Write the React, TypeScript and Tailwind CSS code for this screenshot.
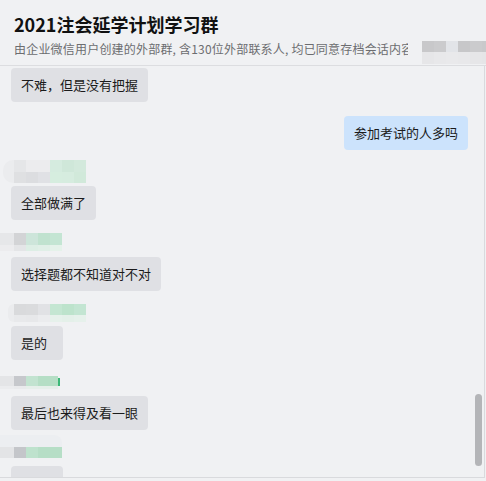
import React from "react";

type Row = { h: number; cells: [number, string][] };

function Mosaic({ rows, pl = 0 }: { rows: Row[]; pl?: number }) {
  return (
    <div className="flex flex-col" style={{ paddingLeft: pl }}>
      {rows.map((r, i) => (
        <div key={i} className="flex">
          {r.cells.map(([w, c], j) => (
            <div key={j} style={{ width: w, height: r.h, background: c }} />
          ))}
        </div>
      ))}
    </div>
  );
}

function Bubble({ text, className = "" }: { text: string; className?: string }) {
  return (
    <div
      className={`inline-flex h-[34px] min-w-[52px] items-center rounded-[4px] bg-[#dfe0e4] px-[10px] text-[13px] leading-[18px] text-[#1b1b1b] ${className}`}
    >
      {text}
    </div>
  );
}

export default function App() {
  return (
    <div
      className="relative h-[481px] w-[486px] overflow-hidden bg-[#f0f1f3]"
      style={{ fontFamily: '"Noto Sans CJK SC", "Noto Sans", sans-serif' }}
    >
      {/* header */}
      <div className="relative h-[66px] border-b border-[#dcdde0] pl-[14px] pt-[12px]">
        <div className="text-[18px] font-bold leading-[24px] text-[#111]">2021注会延学计划学习群</div>
        <div className="mt-[4px] w-[394px] overflow-hidden whitespace-nowrap text-[12px] leading-[18px] tracking-[0.2px] text-[#6c6d70]">
          由企业微信用户创建的外部群, 含130位外部联系人, 均已同意存档会话内容
        </div>
        <div className="absolute left-[422px] top-[41px]">
          <Mosaic
            rows={[
              { h: 11, cells: [[12, "#c8c8ca"], [12, "#cbcbcd"], [12, "#e2e4e8"], [12, "#c7c7c9"], [12, "#cbcbcd"], [4, "#c9c9cb"]] },
              { h: 12, cells: [[12, "#e6e6e8"], [12, "#e8e8ea"], [12, "#e9e9eb"], [12, "#e8e8ea"], [12, "#e6e6e8"], [4, "#e5e5e7"]] },
            ]}
          />
        </div>
      </div>

      {/* messages area */}
      <div className="relative h-[412px] w-[485px] overflow-hidden border-b border-r border-[#d9dadd]">
        <div className="flex flex-col pl-[11px] pr-[16px]">
          <div className="mt-[2px]">
            <Bubble text="不难，但是没有把握" />
          </div>
          <div className="mt-[14px] flex justify-end">
            <div className="inline-flex h-[34px] items-center rounded-[4px] bg-[#cce3fc] px-[10px] text-[13px] leading-[18px] text-[#1b1b1b]">
              参加考试的人多吗
            </div>
          </div>

          {/* name A */}
          <div className="-ml-[8px] mt-[10px] flex">
            <div className="h-[23px] w-[11px] rounded-l-[10px] bg-[#ebecee]" />
            <Mosaic
              rows={[
                { h: 12, cells: [[12, "#e5e6e8"], [12, "#ececee"], [12, "#ececee"], [12, "#d5ebdf"], [12, "#cfe7d9"], [12, "#d3e9dc"]] },
                { h: 11, cells: [[12, "#dfe0e2"], [12, "#dcdde0"], [12, "#e0e1e5"], [12, "#d6eddf"], [12, "#d6ecdf"], [12, "#d1e9da"]] },
              ]}
            />
          </div>
          <div className="mt-[3px]">
            <Bubble text="全部做满了" />
          </div>

          {/* name B */}
          <div className="-ml-[11px] mt-[13px]">
            <Mosaic
              rows={[
                { h: 12, cells: [[14, "#e6e7e9"], [12, "#d3d4d6"], [12, "#cde5da"], [12, "#c0e2cf"], [12, "#c4e5d3"]] },
                { h: 6, cells: [[14, "#ececee"], [12, "#e4e5e7"], [12, "#ddeee5"], [12, "#e0efe7"], [12, "#e5f2ea"]] },
              ]}
            />
          </div>
          <div className="mt-[6px]">
            <Bubble text="选择题都不知道对不对" />
          </div>

          {/* name C */}
          <div className="-ml-[3px] mt-[13px] flex">
            <div className="h-[18px] w-[6px] rounded-l-[8px] bg-[#ebecee]" />
            <Mosaic
              rows={[
                { h: 11, cells: [[12, "#d9dadc"], [12, "#dadbdd"], [12, "#e1e2e5"], [12, "#c4e6d2"], [12, "#bde3cc"], [12, "#c3e5d2"]] },
                { h: 7, cells: [[12, "#e8e9eb"], [12, "#e7e8ea"], [12, "#ebecee"], [12, "#e6f1eb"], [12, "#e4f0e9"], [12, "#e6f1eb"]] },
              ]}
            />
          </div>
          <div className="mt-[4px]">
            <Bubble text="是的" />
          </div>

          {/* name D */}
          <div className="-ml-[11px] mt-[16px] flex items-start">
            <Mosaic
              rows={[
                { h: 10, cells: [[14, "#e4e5e7"], [12, "#c6c8cc"], [12, "#c2e3d0"], [20, "#b5dec5"]] },
                { h: 3, cells: [[14, "#ebecee"], [12, "#e9eaec"], [12, "#e6efea"], [20, "#e6efea"]] },
              ]}
            />
            <div className="mt-[2px] h-[8px] w-[2px] bg-[#3cb878]" />
          </div>
          <div className="mt-[7px]">
            <Bubble text="最后也来得及看一眼" />
          </div>

          {/* name E */}
          <div className="-ml-[11px] mt-[5px]">
            <div className="h-[12px] w-[62px] rounded-tr-[8px] bg-[#eceef1]" />
            <Mosaic
              rows={[
                { h: 11, cells: [[14, "#e3e4e6"], [12, "#c4c6ca"], [12, "#bee2cd"], [24, "#b6dec6"]] },
              ]}
            />
          </div>
          <div className="mt-[8px]">
            <Bubble text="是的" />
          </div>
        </div>

        {/* scrollbar */}
        <div className="absolute left-[475px] top-[328px] h-[72px] w-[7px] rounded-full bg-[#b4b5b8]" />
      </div>
    </div>
  );
}
